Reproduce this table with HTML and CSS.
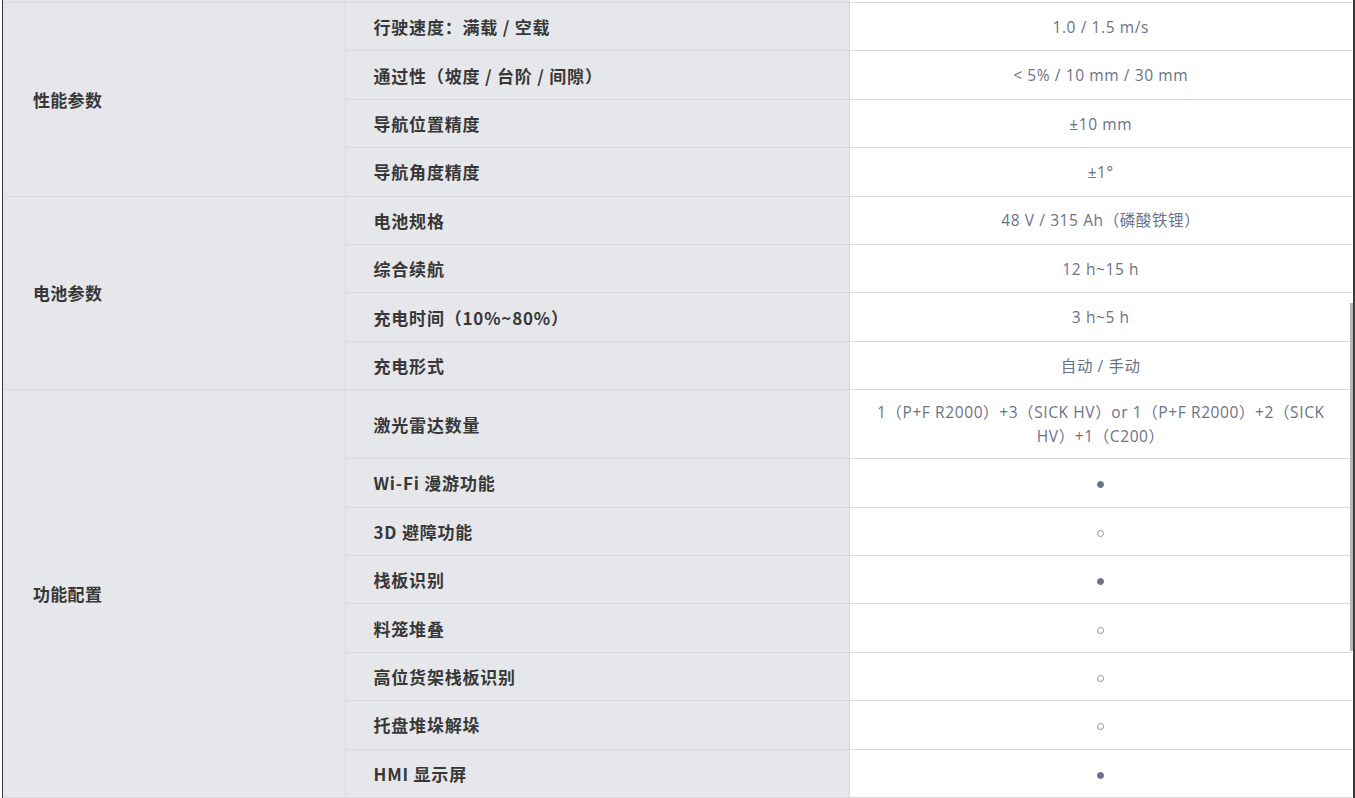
FILE: index.html
```html
<!DOCTYPE html>
<html lang="zh-CN">
<head>
<meta charset="utf-8">
<title>参数表</title>
<link rel="stylesheet" href="styles.css">
</head>
<body>
<div class="frame">
  <table class="spec">
    <colgroup>
      <col class="c1"><col class="c2"><col class="c3">
    </colgroup>
    <tbody>
      <tr class="stub"><td class="sec"></td><td class="lbl"></td><td class="val"></td></tr>

      <tr><td class="sec" rowspan="4">性能参数</td><td class="lbl">行驶速度：满载 / 空载</td><td class="val">1.0 / 1.5 m/s</td></tr>
      <tr><td class="lbl">通过性（坡度 / 台阶 / 间隙）</td><td class="val">&lt; 5% / 10 mm / 30 mm</td></tr>
      <tr><td class="lbl">导航位置精度</td><td class="val">±10 mm</td></tr>
      <tr><td class="lbl">导航角度精度</td><td class="val">±1°</td></tr>

      <tr><td class="sec" rowspan="4">电池参数</td><td class="lbl">电池规格</td><td class="val">48 V / 315 Ah（磷酸铁锂）</td></tr>
      <tr><td class="lbl">综合续航</td><td class="val">12 h~15 h</td></tr>
      <tr><td class="lbl">充电时间（10%~80%）</td><td class="val">3 h~5 h</td></tr>
      <tr><td class="lbl">充电形式</td><td class="val">自动 / 手动</td></tr>

      <tr class="tall"><td class="sec" rowspan="8">功能配置</td><td class="lbl">激光雷达数量</td><td class="val">1（P+F R2000）+3（SICK HV）or 1（P+F R2000）+2（SICK<br>HV）+1（C200）</td></tr>
      <tr><td class="lbl">Wi-Fi 漫游功能</td><td class="val"><span class="dot full"></span></td></tr>
      <tr><td class="lbl">3D 避障功能</td><td class="val"><span class="dot"></span></td></tr>
      <tr><td class="lbl">栈板识别</td><td class="val"><span class="dot full"></span></td></tr>
      <tr><td class="lbl">料笼堆叠</td><td class="val"><span class="dot"></span></td></tr>
      <tr><td class="lbl">高位货架栈板识别</td><td class="val"><span class="dot"></span></td></tr>
      <tr><td class="lbl">托盘堆垛解垛</td><td class="val"><span class="dot"></span></td></tr>
      <tr><td class="lbl">HMI 显示屏</td><td class="val"><span class="dot full"></span></td></tr>
    </tbody>
  </table>
  <div class="thumb"></div>
</div>
</body>
</html>
```

FILE: styles.css
```css
html, body {
  margin: 0;
  padding: 0;
  background: #ffffff;
  overflow: hidden;
}

.frame {
  position: relative;
  margin-left: 2px;
  width: 1350px;
  border-left: 1px solid #3a3a3a;
  border-right: 3px solid #3a3a3a;
  height: 798px;
  overflow: hidden;
}

.spec {
  width: 1349px;
  border-collapse: collapse;
  table-layout: fixed;
  font-family: "Noto Sans CJK SC", "Noto Sans", sans-serif;
}

.c1 { width: 342px; }
.c2 { width: 504px; }
.c3 { width: 503px; }

.spec td {
  border: 1px solid #d9dadd;
  height: 47.42px;
  padding: 0;
  vertical-align: middle;
}

.spec tr:first-child td {
  border-top: none;
}

.spec td:first-child {
  border-left: none;
}

.spec td:last-child {
  border-right: none;
}

.spec tr.stub td {
  height: 2px;
}

.spec tr.tall td {
  height: 68px;
}

.sec {
  background: #e6e7ea;
  padding-left: 30px !important;
  font-size: 17px;
  font-weight: 700;
  color: #383838;
  letter-spacing: 0.3px;
}

.lbl {
  background: #e6e7ea;
  padding-left: 28px !important;
  font-size: 17px;
  font-weight: 700;
  color: #383838;
  letter-spacing: 0.8px;
}

.val {
  background: #ffffff;
  text-align: center;
  font-family: "Open Sans", "Noto Sans CJK SC", sans-serif;
  font-size: 15.5px;
  letter-spacing: 0.6px;
  line-height: 24px;
  color: #6b7287;
  padding: 0 10px !important;
}

.dot {
  display: inline-block;
  width: 7px;
  height: 7px;
  border-radius: 50%;
  box-sizing: border-box;
  border: 1px solid #8a8f9c;
  vertical-align: middle;
}

.dot.full {
  background: #6b7287;
  border-color: #6b7287;
}

.thumb {
  position: absolute;
  right: 0;
  top: 303px;
  width: 3px;
  height: 348px;
  background: #b9b9b9;
}
```
